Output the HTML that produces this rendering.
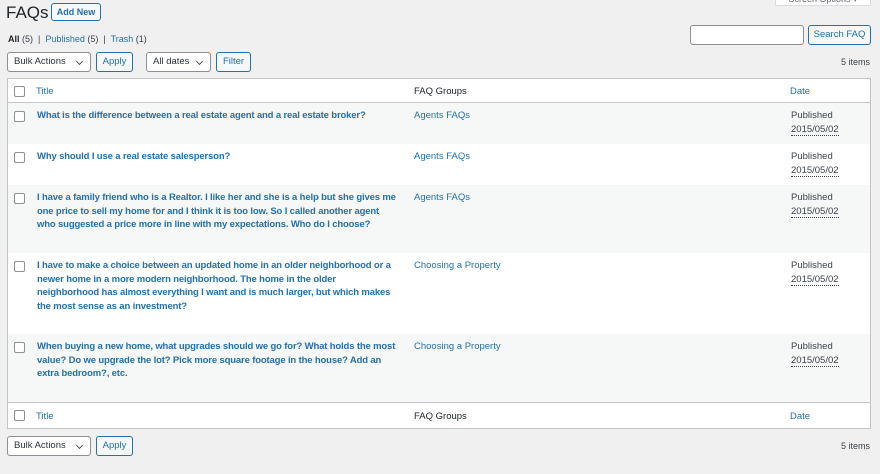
<!DOCTYPE html>
<html><head><meta charset="utf-8"><style>
*{box-sizing:border-box;margin:0;padding:0}
body{width:880px;height:474px;background:#f0f0f1;font-family:"Liberation Sans",sans-serif;font-size:9.5px;color:#3c434a;position:relative;overflow:hidden}
.a{position:absolute}
a{color:#2271b1;text-decoration:none}
.btn{position:absolute;border:1px solid #2271b1;border-radius:3px;color:#2271b1;background:#f6f7f7;text-align:center;font-size:9.5px}
.sel{position:absolute;border:1px solid #8c8f94;border-radius:3px;background:#fff;color:#2c3338;font-size:9.5px;padding-left:6px}
.sel:after{content:"";position:absolute;right:8px;top:6px;width:4px;height:4px;border-right:1.3px solid #50575e;border-bottom:1.3px solid #50575e;transform:rotate(45deg)}
.cb{position:absolute;left:14px;width:11px;height:11px;border:1px solid #8c8f94;border-radius:2px;background:#fff}
.row{position:absolute;left:8px;width:862px}
.t{position:absolute;left:29px;width:372px;font-weight:bold;color:#2271b1;line-height:13.5px;letter-spacing:-0.15px}
.g{position:absolute;left:406px;color:#2271b1;line-height:13.5px}
.d{position:absolute;left:783px;color:#3c434a;line-height:13.5px}
.d span{border-bottom:1px dotted #3c434a}
</style></head><body>
<div class="a" style="left:6px;top:3px;font-size:17px;color:#1d2327">FAQs</div>
<div class="btn" style="left:51px;top:3px;width:50px;height:18px;line-height:16px;font-weight:bold;font-size:9px">Add New</div>
<div class="a" style="left:775px;top:-8px;width:96px;height:14px;background:#fff;border:1px solid #dcdcde;font-size:9px;color:#646970;text-align:center;line-height:12px">Screen Options ▾</div>
<div class="a" style="left:8px;top:34px;font-size:9px"><b style="color:#1d2327">All</b> (5) &nbsp;|&nbsp; <a>Published</a> (5) &nbsp;|&nbsp; <a>Trash</a> (1)</div>
<div class="a" style="left:690px;top:25px;width:114px;height:20px;background:#fff;border:1px solid #8c8f94;border-radius:3px"></div>
<div class="btn" style="left:808px;top:25px;width:63px;height:20px;line-height:18px">Search FAQ</div>
<div class="sel" style="left:7px;top:52px;width:84px;height:20px;line-height:18px">Bulk Actions</div>
<div class="btn" style="left:96px;top:52px;width:37px;height:20px;line-height:18px">Apply</div>
<div class="sel" style="left:146px;top:52px;width:65px;height:20px;line-height:18px">All dates</div>
<div class="btn" style="left:216px;top:52px;width:35px;height:20px;line-height:18px">Filter</div>
<div class="a" style="right:10px;top:57px;font-size:9px">5 items</div>

<div class="a" style="left:7px;top:78px;width:864px;height:351px;border:1px solid #c3c4c7;background:#fff"></div>
<div class="row" style="top:79px;height:24px;border-bottom:1px solid #c3c4c7"><div class="cb" style="left:6px;top:7px"></div><a class="a" style="left:28px;top:7px">Title</a><div class="a" style="left:406px;top:7px;color:#1d2327">FAQ Groups</div><a class="a" style="left:782px;top:7px">Date</a></div>
<div class="row" style="top:103px;height:41px;background:#f6f7f7"><div class="cb" style="left:6px;top:8px"></div><div class="t" style="top:6px">What is the difference between a real estate agent and a real estate broker?</div><div class="g" style="top:6px">Agents FAQs</div><div class="d" style="top:6px">Published<br><span>2015/05/02</span></div></div>
<div class="row" style="top:144px;height:41px;background:#fff"><div class="cb" style="left:6px;top:8px"></div><div class="t" style="top:6px">Why should I use a real estate salesperson?</div><div class="g" style="top:6px">Agents FAQs</div><div class="d" style="top:6px">Published<br><span>2015/05/02</span></div></div>
<div class="row" style="top:185px;height:68px;background:#f6f7f7"><div class="cb" style="left:6px;top:8px"></div><div class="t" style="top:6px">I have a family friend who is a Realtor. I like her and she is a help but she gives me<br>one price to sell my home for and I think it is too low. So I called another agent<br>who suggested a price more in line with my expectations. Who do I choose?</div><div class="g" style="top:6px">Agents FAQs</div><div class="d" style="top:6px">Published<br><span>2015/05/02</span></div></div>
<div class="row" style="top:253px;height:81px;background:#fff"><div class="cb" style="left:6px;top:8px"></div><div class="t" style="top:6px">I have to make a choice between an updated home in an older neighborhood or a<br>newer home in a more modern neighborhood. The home in the older<br>neighborhood has almost everything I want and is much larger, but which makes<br>the most sense as an investment?</div><div class="g" style="top:6px">Choosing a Property</div><div class="d" style="top:6px">Published<br><span>2015/05/02</span></div></div>
<div class="row" style="top:334px;height:68px;background:#f6f7f7"><div class="cb" style="left:6px;top:8px"></div><div class="t" style="top:6px">When buying a new home, what upgrades should we go for? What holds the most<br>value? Do we upgrade the lot? Pick more square footage in the house? Add an<br>extra bedroom?, etc.</div><div class="g" style="top:6px">Choosing a Property</div><div class="d" style="top:6px">Published<br><span>2015/05/02</span></div></div>
<div class="row" style="top:402px;height:26px;border-top:1px solid #c3c4c7;background:#fff"><div class="cb" style="left:6px;top:7px"></div><a class="a" style="left:28px;top:8px">Title</a><div class="a" style="left:406px;top:8px;color:#1d2327">FAQ Groups</div><a class="a" style="left:782px;top:8px">Date</a></div>

<div class="sel" style="left:7px;top:436px;width:84px;height:20px;line-height:18px">Bulk Actions</div>
<div class="btn" style="left:96px;top:436px;width:37px;height:20px;line-height:18px">Apply</div>
<div class="a" style="right:10px;top:441px;font-size:9px">5 items</div>
</body></html>
